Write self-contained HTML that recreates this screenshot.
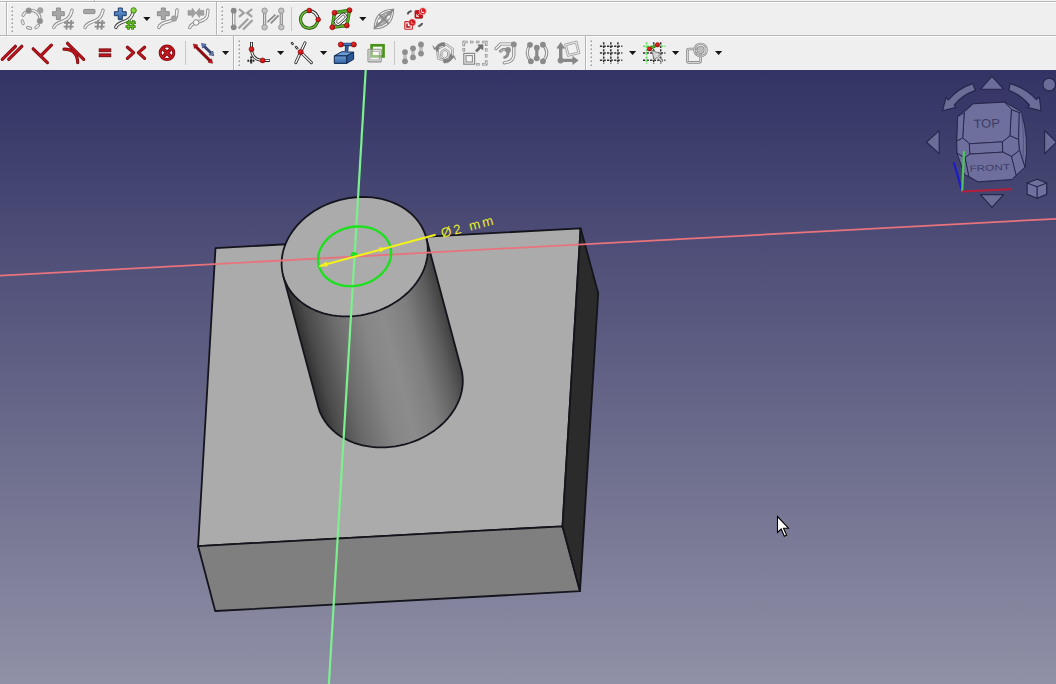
<!DOCTYPE html>
<html><head><meta charset="utf-8"><title>FreeCAD</title>
<style>
html,body{margin:0;padding:0;background:#efefef;width:1056px;height:684px;overflow:hidden;font-family:"Liberation Sans",sans-serif}
svg{display:block;position:absolute;left:0;top:0}
</style></head><body>
<svg width="1056" height="684" viewBox="0 0 1056 684">

<defs>
<linearGradient id="bg" x1="0" y1="70" x2="0" y2="684" gradientUnits="userSpaceOnUse">
<stop offset="0" stop-color="#333365"/><stop offset="1" stop-color="#9090a6"/>
</linearGradient>
<linearGradient id="cyl" x1="283.22" y1="275.8" x2="426.18" y2="237.6" gradientUnits="userSpaceOnUse">
<stop offset="0" stop-color="#303030"/><stop offset=".08" stop-color="#4a4a4a"/><stop offset=".25" stop-color="#6c6c6c"/>
<stop offset=".45" stop-color="#868686"/><stop offset=".58" stop-color="#8c8c8c"/><stop offset=".75" stop-color="#7e7e7e"/><stop offset=".9" stop-color="#5e5e5e"/><stop offset="1" stop-color="#404040"/>
</linearGradient>
</defs>
<rect x="0" y="70" width="1056" height="614" fill="url(#bg)"/>
<g stroke="#14141c" stroke-width="1.8" stroke-linejoin="round">
<polygon points="215.5,248.1 580.6,228.3 562.5,526.3 198.1,546.1" fill="#ababab"/>
<polygon points="198.1,546.1 562.5,526.3 580,591.2 215.2,611" fill="#7f7f7f"/>
<polygon points="580.6,228.3 598.2,293.3 580,591.2 562.5,526.3" fill="#2b2b2b"/>
<path d="M283.18 275.63 L318.18 406.63 L319.32 410.3 L320.77 413.87 L322.51 417.32 L324.54 420.65 L326.84 423.84 L329.42 426.87 L332.25 429.74 L335.33 432.42 L338.64 434.92 L342.17 437.21 L345.91 439.29 L349.83 441.15 L353.92 442.78 L358.17 444.17 L362.55 445.32 L367.05 446.23 L371.64 446.88 L376.31 447.28 L381.04 447.43 L385.81 447.32 L390.59 446.96 L395.37 446.34 L400.13 445.47 L404.84 444.35 L409.48 442.99 L414.04 441.4 L418.5 439.57 L422.83 437.52 L427.02 435.26 L431.05 432.79 L434.91 430.14 L438.57 427.3 L442.02 424.29 L445.25 421.12 L448.24 417.81 L450.97 414.37 L453.45 410.82 L455.65 407.17 L457.57 403.43 L459.21 399.63 L460.54 395.78 L461.57 391.89 L462.29 387.98 L462.7 384.07 L462.8 380.18 L462.58 376.32 L462.06 372.51 L461.22 368.77 L426.22 237.77 L427.06 241.51 L427.58 245.32 L427.8 249.18 L427.7 253.07 L427.29 256.98 L426.57 260.89 L425.54 264.78 L424.21 268.63 L422.57 272.43 L420.65 276.17 L418.45 279.82 L415.97 283.37 L413.24 286.81 L410.25 290.12 L407.02 293.29 L403.57 296.3 L399.91 299.14 L396.05 301.79 L392.02 304.26 L387.83 306.52 L383.5 308.57 L379.04 310.4 L374.48 311.99 L369.84 313.35 L365.13 314.47 L360.37 315.34 L355.59 315.96 L350.81 316.32 L346.04 316.43 L341.31 316.28 L336.64 315.88 L332.05 315.23 L327.55 314.32 L323.17 313.17 L318.92 311.78 L314.83 310.15 L310.91 308.29 L307.17 306.21 L303.64 303.92 L300.33 301.42 L297.25 298.74 L294.42 295.87 L291.84 292.84 L289.54 289.65 L287.51 286.32 L285.77 282.87 L284.32 279.3 L283.18 275.63Z" fill="url(#cyl)" stroke="none"/>
<path d="M283.18 275.63 L318.18 406.63 L319.32 410.3 L320.77 413.87 L322.51 417.32 L324.54 420.65 L326.84 423.84 L329.42 426.87 L332.25 429.74 L335.33 432.42 L338.64 434.92 L342.17 437.21 L345.91 439.29 L349.83 441.15 L353.92 442.78 L358.17 444.17 L362.55 445.32 L367.05 446.23 L371.64 446.88 L376.31 447.28 L381.04 447.43 L385.81 447.32 L390.59 446.96 L395.37 446.34 L400.13 445.47 L404.84 444.35 L409.48 442.99 L414.04 441.4 L418.5 439.57 L422.83 437.52 L427.02 435.26 L431.05 432.79 L434.91 430.14 L438.57 427.3 L442.02 424.29 L445.25 421.12 L448.24 417.81 L450.97 414.37 L453.45 410.82 L455.65 407.17 L457.57 403.43 L459.21 399.63 L460.54 395.78 L461.57 391.89 L462.29 387.98 L462.7 384.07 L462.8 380.18 L462.58 376.32 L462.06 372.51 L461.22 368.77 L426.22 237.77" fill="none"/>
<path d="M427.72 252.74 L427.34 256.65 L426.64 260.55 L425.64 264.44 L424.33 268.3 L422.73 272.11 L420.83 275.85 L418.65 279.51 L416.2 283.07 L413.48 286.52 L410.51 289.84 L407.3 293.02 L403.87 296.04 L400.23 298.9 L396.39 301.57 L392.37 304.06 L388.2 306.34 L383.87 308.4 L379.43 310.25 L374.88 311.86 L370.24 313.24 L365.53 314.38 L360.78 315.27 L356 315.91 L351.22 316.3 L346.45 316.43 L341.72 316.31 L337.04 315.93 L332.44 315.29 L327.93 314.41 L323.54 313.28 L319.28 311.91 L315.18 310.3 L311.24 308.46 L307.49 306.39 L303.94 304.12 L300.61 301.64 L297.51 298.97 L294.65 296.12 L292.05 293.1 L289.72 289.93 L287.67 286.61 L285.91 283.17 L284.44 279.61 L283.27 275.95 L282.4 272.21 L281.85 268.41 L281.61 264.55 L281.68 260.66 L282.06 256.75 L282.76 252.85 L283.76 248.96 L285.07 245.1 L286.67 241.29 L288.57 237.55 L290.75 233.89 L293.2 230.33 L295.92 226.88 L298.89 223.56 L302.1 220.38 L305.53 217.36 L309.17 214.5 L313.01 211.83 L317.03 209.34 L321.2 207.06 L325.53 205 L329.97 203.15 L334.52 201.54 L339.16 200.16 L343.87 199.02 L348.62 198.13 L353.4 197.49 L358.18 197.1 L362.95 196.97 L367.68 197.09 L372.36 197.47 L376.96 198.11 L381.47 198.99 L385.86 200.12 L390.12 201.49 L394.22 203.1 L398.16 204.94 L401.91 207.01 L405.46 209.28 L408.79 211.76 L411.89 214.43 L414.75 217.28 L417.35 220.3 L419.68 223.47 L421.73 226.79 L423.49 230.23 L424.96 233.79 L426.13 237.45 L427 241.19 L427.55 244.99 L427.79 248.85 L427.72 252.74Z" fill="#ababab"/>
</g>
<line x1="0" y1="275.7" x2="1056" y2="218.8" stroke="#e8737d" stroke-width="1.8"/>
<line x1="365.7" y1="70" x2="328.9" y2="684" stroke="#7df08e" stroke-width="2.2"/>
<path d="M391.11 254.32 L390.82 256.92 L390.25 259.52 L389.42 262.1 L388.31 264.63 L386.95 267.1 L385.35 269.49 L383.51 271.77 L381.45 273.94 L379.19 275.97 L376.74 277.86 L374.12 279.58 L371.35 281.12 L368.45 282.47 L365.45 283.63 L362.37 284.57 L359.23 285.3 L356.05 285.81 L352.86 286.1 L349.68 286.16 L346.55 285.99 L343.47 285.6 L340.48 284.98 L337.59 284.14 L334.84 283.1 L332.23 281.85 L329.8 280.4 L327.55 278.77 L325.51 276.97 L323.69 275.01 L322.11 272.91 L320.78 270.69 L319.7 268.35 L318.88 265.93 L318.34 263.42 L318.08 260.87 L318.09 258.28 L318.38 255.68 L318.95 253.08 L319.78 250.5 L320.89 247.97 L322.25 245.5 L323.85 243.11 L325.69 240.83 L327.75 238.66 L330.01 236.63 L332.46 234.74 L335.08 233.02 L337.85 231.48 L340.75 230.13 L343.75 228.97 L346.83 228.03 L349.97 227.3 L353.15 226.79 L356.34 226.5 L359.52 226.44 L362.65 226.61 L365.73 227 L368.72 227.62 L371.61 228.46 L374.36 229.5 L376.97 230.75 L379.4 232.2 L381.65 233.83 L383.69 235.63 L385.51 237.59 L387.09 239.69 L388.42 241.91 L389.5 244.25 L390.32 246.67 L390.86 249.18 L391.12 251.73 L391.11 254.32Z" fill="none" stroke="#1ee01e" stroke-width="2.4"/>
<ellipse cx="354" cy="254.7" rx="3.4" ry="2.6" fill="#1ee01e"/>
<g stroke="#f2f21a" fill="#f2f21a">
<line x1="319.1" y1="266.2" x2="435.6" y2="234.8" stroke-width="2"/>
<polygon points="319.1,266.2 326.6,261.6 327.8,266.4" stroke="none"/>
<polygon points="387.6,247.8 380.1,252.4 378.9,247.6" stroke="none"/>
</g>
<text transform="translate(442.3,237.8) rotate(-14.3)" font-family="Liberation Sans, sans-serif" font-size="13.4" fill="#ecec28" textLength="53.5" lengthAdjust="spacing">&#216;2 mm</text>

<g id="navcube" stroke-linejoin="round" stroke-linecap="round">
<!-- arrow buttons -->
<g fill="#6c6c99" stroke="#25254c" stroke-width="1.15">
<polygon points="991.9,76.4 1003.6,89.2 980.6,89.2"/>
<polygon points="980.4,194.6 1003.6,194.6 992,207.4"/>
<polygon points="926.6,142.2 939.2,130.6 939.2,153.6"/>
<polygon points="1056.6,142.2 1044.6,130.6 1044.6,153.6"/>
<circle cx="1049.2" cy="84.6" r="6.3"/>
<!-- left curved arrow -->
<path d="M972.6 83.6 L975.4 90.4 Q962 95.2 954.2 105.2 L956.2 107.4 L942.6 110.8 L946 97.4 L948.4 100 Q957.6 88.6 972.6 83.6Z"/>
<!-- right curved arrow -->
<path d="M1010.2 83.6 L1008.8 90.2 Q1021.4 95 1029.6 105.4 L1027.4 107.4 L1041 110.8 L1039.4 97 L1036.4 99.6 Q1026.6 88.4 1010.2 83.6Z"/>
</g>
<!-- cube faces -->
<g fill="#6f6f9d" stroke="#24244a" stroke-width=".9">
<!-- silhouette backing -->
<path d="M973.4 103.6 L1004.9 102 L1021 111.8 Q1029.6 138 1024.9 167.2 L1011.8 179.5 L978 181.8 L965 175 L957.3 153.4 L957 141 L958 116.5Z"/>
<!-- top -->
<polygon points="973.4,103.8 1004.9,102.2 1011.8,109.6 1010.3,135.7 1002.6,141.8 969.6,143.8 962.7,138 964.2,112.7"/>
<!-- left edge -->
<polygon points="958,116.5 964.2,112.7 962.7,138 957,141"/>
<!-- corner left -->
<polygon points="957,141 962.7,138 969.6,143.8 970.3,154.1 965,158 957.3,153.4"/>
<!-- top-front edge -->
<polygon points="969.6,143.8 1002.6,141.8 1003.1,152.1 970.3,154.1"/>
<!-- front -->
<polygon points="970.3,154.1 1003.1,152.1 1011.8,156.4 1016.4,174.9 1011.8,179.5 978,181.8 968.8,176.4 965,158"/>
<!-- front-left edge -->
<polygon points="957.3,153.4 965,158 968.8,176.4 965,175"/>
<!-- corner right -->
<polygon points="1002.6,141.8 1010.3,135.7 1018.7,139.5 1019.5,150.3 1011.8,156.4 1003.1,152.1"/>
<!-- top-right edge -->
<polygon points="1011.8,109.6 1019.5,112.7 1018.7,139.5 1010.3,135.7"/>
<!-- top-back-right corner -->
<polygon points="1004.9,102.2 1021,111.8 1019.5,112.7 1011.8,109.6"/>
<!-- right face -->
<path d="M1019.5 112.7 L1021 111.8 Q1029.6 138 1024.9 167.2 L1019.5 150.3 L1018.7 139.5Z"/>
<path d="M1021.4 113.5 Q1024.6 138 1022.8 160" fill="none" stroke-width=".8" stroke="#4a4a78"/>
<!-- front-right edge -->
<polygon points="1011.8,156.4 1019.5,150.3 1024.9,167.2 1016.4,174.9"/>
</g>
<g font-family="Liberation Sans, sans-serif" fill="#3c3c66" text-anchor="middle">
<text transform="translate(986.9,127.6) rotate(-2.5)" font-size="12.2" textLength="26.5" lengthAdjust="spacingAndGlyphs">TOP</text>
<text transform="translate(989.9,170.6) rotate(-2.5) scale(1,.68)" font-size="12.2" textLength="40.5" lengthAdjust="spacingAndGlyphs">FRONT</text>
</g>
<!-- axes -->
<g stroke-width="2.2" fill="none" stroke-linecap="butt">
<line x1="962.2" y1="191.5" x2="953.8" y2="162.2" stroke="#1c1ccc"/>
<line x1="962.2" y1="191.5" x2="964" y2="151.1" stroke="#4ec45e"/>
<line x1="962.2" y1="191.5" x2="1011.6" y2="189.1" stroke="#b0203c"/>
</g>
<!-- mini cube -->
<g fill="#70709e" stroke="#24244a" stroke-width="1.2">
<polygon points="1037.1,179.2 1046.7,183 1046.7,194.4 1037.1,198.2 1027.1,194.4 1027.1,183"/>
<path d="M1027.1 183 L1037.1 186.8 L1046.7 183 M1037.1 186.8 L1037.1 198.2" fill="none"/>
</g>
</g>


<path d="M777.5 516.5 L777.5 532.5 L781.2 529 L784.3 536.3 L786.6 535.3 L783.5 528.2 L788.5 528.2 Z" fill="#fff" stroke="#000" stroke-width="1.1" stroke-linejoin="miter"/>

<g id="toolbar">
<defs>
<radialGradient id="rd" cx=".4" cy=".38" r=".65"><stop offset="0" stop-color="#e82a2a"/><stop offset=".65" stop-color="#cc1616"/><stop offset="1" stop-color="#980a0a"/></radialGradient>
<linearGradient id="blu" x1="0" y1="0" x2="0" y2="1"><stop offset="0" stop-color="#6a9ad4"/><stop offset="1" stop-color="#3465a4"/></linearGradient>
<path id="dd" d="M0 0 L7.2 0 L3.6 4 Z" fill="#161616"/>
<g id="hdl" fill="#a0a0a0">
<rect x="0" y="0" width="1.6" height="1.6"/><rect x="0" y="4" width="1.6" height="1.6"/><rect x="0" y="8" width="1.6" height="1.6"/><rect x="0" y="12" width="1.6" height="1.6"/><rect x="0" y="16" width="1.6" height="1.6"/><rect x="0" y="20" width="1.6" height="1.6"/><rect x="0" y="24" width="1.6" height="1.6"/>
<g fill="#fbfbfb"><rect x="-1" y="-1" width="1.2" height="1.2"/><rect x="-1" y="3" width="1.2" height="1.2"/><rect x="-1" y="7" width="1.2" height="1.2"/><rect x="-1" y="11" width="1.2" height="1.2"/><rect x="-1" y="15" width="1.2" height="1.2"/><rect x="-1" y="19" width="1.2" height="1.2"/><rect x="-1" y="23" width="1.2" height="1.2"/></g>
</g>
</defs>
<rect x="0" y="0" width="1056" height="70" fill="#efefef"/>
<!-- frame lines -->
<g shape-rendering="crispEdges">
<rect x="0" y="0" width="1056" height="1" fill="#f4f4f4"/>
<rect x="0" y="1" width="1056" height="1" fill="#b6b6b6"/>
<rect x="0" y="2" width="1056" height="1" fill="#fcfcfc"/>
<rect x="94" y="0" width="1" height="1" fill="#b6b6b6"/><rect x="95" y="0" width="1" height="1" fill="#fff"/>
<rect x="0" y="35" width="1056" height="1" fill="#b6b6b6"/>
<rect x="0" y="36" width="1056" height="1" fill="#fcfcfc"/>
<rect x="6" y="2" width="1" height="33" fill="#b6b6b6"/><rect x="7" y="3" width="1" height="32" fill="#fcfcfc"/>
<rect x="216" y="2" width="1" height="33" fill="#b6b6b6"/><rect x="217" y="3" width="1" height="32" fill="#fcfcfc"/>
<rect x="233" y="36" width="1" height="34" fill="#b6b6b6"/><rect x="234" y="37" width="1" height="33" fill="#fcfcfc"/>
<rect x="585" y="36" width="1" height="34" fill="#b6b6b6"/><rect x="586" y="37" width="1" height="33" fill="#fcfcfc"/>
<!-- in-toolbar separators -->
<rect x="291" y="7" width="1" height="24" fill="#c6c6c6"/>
<rect x="185" y="41" width="1" height="24" fill="#c6c6c6"/>
<rect x="394" y="41" width="1" height="24" fill="#c6c6c6"/>
</g>
<use href="#hdl" x="11.4" y="6.4"/>
<use href="#hdl" x="221.4" y="6.4"/>
<use href="#hdl" x="238.4" y="40.4"/>
<use href="#hdl" x="590.4" y="40.4"/>
<!-- dropdown arrows -->
<use href="#dd" x="143.2" y="17"/>
<use href="#dd" x="359.2" y="17"/>
<use href="#dd" x="222" y="51"/>
<use href="#dd" x="277" y="51"/>
<use href="#dd" x="320" y="51"/>
<use href="#dd" x="629" y="51"/>
<use href="#dd" x="672" y="51"/>
<use href="#dd" x="715" y="51"/>

<!-- ================= ROW 1 ================= -->
<!-- 1: periodic bspline (disabled) -->
<g fill="none" stroke-linecap="round">
<g stroke="#8c8c8c" stroke-width="3.2"><path d="M28.7 10.7 A9 9 0 0 1 39.9 21"/><path d="M23 15.2 L25 12.6"/><path d="M22.3 21 L23.2 23.6"/><path d="M27.6 27.6 L30.6 28.4"/><path d="M36 27.6 L38.4 25.4"/></g>
<g stroke="#f4f4f4" stroke-width="1.5"><path d="M28.7 10.7 A9 9 0 0 1 39.9 21"/><path d="M23 15.2 L25 12.6"/><path d="M22.3 21 L23.2 23.6"/><path d="M27.6 27.6 L30.6 28.4"/><path d="M36 27.6 L38.4 25.4"/></g>
</g>
<g fill="#8e8e8e" stroke="#a4a4a4" stroke-width=".6"><circle cx="28.7" cy="10.7" r="2.9"/><circle cx="40.2" cy="10.4" r="2.9" fill="#a2a2a2"/><circle cx="39.9" cy="21" r="2.9"/></g>

<!-- 2: increase degree (disabled) -->
<g>
<path d="M56.4 8 h4 v3.7 h3.9 v4 h-3.9 v3.9 h-4 v-3.9 h-3.9 v-4 h3.9z" fill="#a6a6a6" stroke="#8c8c8c" stroke-width="1" stroke-linejoin="round"/>
<g fill="none" stroke-linecap="round"><path d="M53.8 27.4 C56.5 19.5 69.5 24.5 72 10.2" stroke="#8c8c8c" stroke-width="3.4"/><path d="M53.8 27.4 C56.5 19.5 69.5 24.5 72 10.2" stroke="#f4f4f4" stroke-width="1.6"/></g>
<path d="M64 22.8 h10 M63.6 26.6 h10 M67.4 20 l-1 9.6 M71.4 20 l-1 9.6" stroke="#8e8e8e" stroke-width="1.9" fill="none"/>
</g>

<!-- 3: decrease degree (disabled) -->
<g>
<rect x="83.6" y="9.4" width="11.4" height="4.2" rx="1" fill="#a6a6a6" stroke="#8c8c8c" stroke-width="1"/>
<g fill="none" stroke-linecap="round"><path d="M85 27.4 C87.7 19.5 100.5 24.5 103 10.2" stroke="#8c8c8c" stroke-width="3.4"/><path d="M85 27.4 C87.7 19.5 100.5 24.5 103 10.2" stroke="#f4f4f4" stroke-width="1.6"/></g>
<path d="M95 22.8 h10 M94.6 26.6 h10 M98.4 20 l-1 9.6 M102.4 20 l-1 9.6" stroke="#8e8e8e" stroke-width="1.9" fill="none"/>
</g>

<!-- 4: increase knot multiplicity (enabled) -->
<g>
<path d="M118.3 8 h4 v3.7 h3.9 v4 h-3.9 v3.9 h-4 v-3.9 h-3.9 v-4 h3.9z" fill="url(#blu)" stroke="#1c3a68" stroke-width="1" stroke-linejoin="round"/>
<g fill="none" stroke-linecap="round"><path d="M115.8 27.4 C118.5 19.5 131 24.5 133.4 11" stroke="#3a3a3a" stroke-width="3.4"/><path d="M115.8 27.4 C118.5 19.5 131 24.5 133.4 11" stroke="#f4f4f4" stroke-width="1.6"/></g>
<path d="M126 22.8 h10 M125.6 26.6 h10 M129.4 20 l-1 9.6 M133.4 20 l-1 9.6" stroke="#2e6b0e" stroke-width="2.6" fill="none"/>
<path d="M126 22.8 h10 M125.6 26.6 h10 M129.4 20 l-1 9.6 M133.4 20 l-1 9.6" stroke="#66bb26" stroke-width="1.3" fill="none"/>
<circle cx="133.6" cy="10.4" r="2.7" fill="#84d83c" stroke="#3a7a10" stroke-width=".9"/>
</g>

<!-- 5: decrease knot multiplicity (disabled) -->
<g>
<path d="M161.3 8 h4 v3.7 h3.9 v4 h-3.9 v3.9 h-4 v-3.9 h-3.9 v-4 h3.9z" fill="#a6a6a6" stroke="#8c8c8c" stroke-width="1" stroke-linejoin="round"/>
<g fill="none" stroke-linecap="round"><path d="M158.8 27.4 C161 20 173 23.5 176.2 17 C177 14.5 176.6 12 177 10" stroke="#8c8c8c" stroke-width="3.4"/><path d="M158.8 27.4 C161 20 173 23.5 176.2 17 C177 14.5 176.6 12 177 10" stroke="#f4f4f4" stroke-width="1.6"/></g>
<rect x="171.6" y="16" width="5" height="5" rx="1.6" fill="#a4a4a4" stroke="#949494" stroke-width=".7"/>
</g>

<!-- 6: join curves (disabled) -->
<g>
<path d="M188 10.4 h4.2 v-2.2 l3.7 4.6 l3.7 -4.6 v2.2 h4.2 v4.8 h-4.2 v2.4 l-3.7 -4.6 l-3.7 4.6 v-2.4 h-4.2z" fill="#a0a0a0" stroke="#909090" stroke-width=".6" stroke-linejoin="round"/>
<g fill="none" stroke-linecap="round"><path d="M189.8 27.6 C192 20 205 23.5 207.2 16 C207.8 13.5 207.6 12 207.9 10.2" stroke="#8c8c8c" stroke-width="3.4"/><path d="M189.8 27.6 C192 20 205 23.5 207.2 16 C207.8 13.5 207.6 12 207.9 10.2" stroke="#f4f4f4" stroke-width="1.6"/></g>
<circle cx="196.1" cy="22.5" r="2.8" fill="#f6f6f6" stroke="#8c8c8c" stroke-width="1"/>
</g>

<!-- A: remove axes alignment (disabled) -->
<g>
<path d="M233.7 10.7 V27.3" stroke="#8c8c8c" stroke-width="3.4"/><path d="M233.7 10.7 V27.3" stroke="#f6f6f6" stroke-width="1.4"/>
<circle cx="233.7" cy="10.7" r="2.9" fill="#8a8a8a"/><circle cx="233.7" cy="27.3" r="2.9" fill="#8a8a8a"/>
<g fill="none" stroke="#a0a0a0" stroke-width="2.2" stroke-linecap="butt"><path d="M239 9 L243.8 12.9 L239 16.8"/><path d="M252.2 9 L247.2 12.9 L252.2 16.8"/><path d="M238.6 28.4 L248.2 18.8"/><path d="M243 29.6 L252.6 20"/></g>
</g>

<!-- B: (disabled) two bars with parallels -->
<g>
<path d="M264.6 10.7 V27.3 M281.3 10.7 V27.3" stroke="#8c8c8c" stroke-width="3.2"/><path d="M264.6 10.7 V27.3 M281.3 10.7 V27.3" stroke="#d8d8d8" stroke-width="1.2"/>
<g fill="#c4c4c4" stroke="#909090" stroke-width=".9"><circle cx="264.6" cy="10.7" r="2.7"/><circle cx="264.6" cy="27.3" r="2.7"/><circle cx="281.3" cy="10.7" r="2.7"/><circle cx="281.3" cy="27.3" r="2.7"/></g>
<path d="M267.4 22.2 L275.4 14.6 M270.8 23.4 L278.6 15.4" stroke="#8a8a8a" stroke-width="1.7" fill="none"/>
</g>

<!-- circle by 3 points -->
<g fill="none">
<circle cx="309.2" cy="19.6" r="8.7" stroke="#2c5a10" stroke-width="3.2"/>
<circle cx="309.2" cy="19.6" r="8.7" stroke="#6cc03c" stroke-width="1.5"/>
<path d="M309.3 10.9 A8.7 8.7 0 0 1 317.9 19.6" stroke="#333" stroke-width="3.2"/>
<path d="M309.3 10.9 A8.7 8.7 0 0 1 317.9 19.6" stroke="#f6f6f6" stroke-width="1.5"/>
</g>
<circle cx="309.3" cy="10.5" r="2.4" fill="url(#rd)" stroke="#8c0a0a" stroke-width=".6"/>
<circle cx="318.2" cy="19.6" r="2.4" fill="url(#rd)" stroke="#8c0a0a" stroke-width=".6"/>

<!-- rectangle / slot -->
<g>
<polygon points="334.5,12.8 349.5,10.2 346.8,25.5 332.3,27.3" fill="none" stroke="#2c6a10" stroke-width="3.4" stroke-linejoin="round"/>
<polygon points="334.5,12.8 349.5,10.2 346.8,25.5 332.3,27.3" fill="none" stroke="#58b02a" stroke-width="2" stroke-linejoin="round"/>
<g transform="translate(340.7,19.3) rotate(-42)"><rect x="-7.2" y="-3.6" width="14.4" height="7.2" rx="3" fill="#fdfdfd" stroke="#2a2a2a" stroke-width=".9"/><rect x="-5.2" y="-1.7" width="10.4" height="3.4" rx="1.4" fill="#f0f0f0" stroke="#3a3a3a" stroke-width=".8"/></g>
<g fill="url(#rd)" stroke="#8c0a0a" stroke-width=".6"><circle cx="334.5" cy="12.8" r="2.5"/><circle cx="349.5" cy="10.2" r="2.5"/><circle cx="346.8" cy="25.5" r="2.5"/><circle cx="332.3" cy="27.3" r="2.5"/></g>
</g>

<!-- ellipse (disabled) -->
<g transform="translate(383.9,18.9) rotate(-45)">
<path d="M-13.8 0 Q0 -13.4 13.8 0 Q0 13.4 -13.8 0Z" fill="#f2f2f2" stroke="#8a8a8a" stroke-width="1"/>
<path d="M-11.4 0 Q0 -9.2 11.4 0 Q0 9.2 -11.4 0Z" fill="#b2b2b2" stroke="#8c8c8c" stroke-width=".9"/>
<path d="M-13.6 0 H13.6 M0 -6.4 V6.4" stroke="#8a8a8a" stroke-width="2"/>
<g fill="#f6f6f6"><ellipse cx="-4.4" cy="-2" rx="2" ry="1.15"/><ellipse cx="4.4" cy="2" rx="2" ry="1.15"/></g>
<g fill="#c0c0c0" stroke="#8e8e8e" stroke-width=".6"><circle cx="-4.4" cy="2.1" r="1.5"/><circle cx="4.4" cy="-2.1" r="1.5"/></g>
</g>

<!-- toggle construction -->
<g>
<rect x="415" y="10.6" width="7.6" height="7.6" rx=".8" fill="#c8141c" stroke="#a00c14" stroke-width=".8"/>
<circle cx="422.8" cy="11.2" r="3.5" fill="#d81c24" stroke="#f8d0d0" stroke-width=".7"/>
<path d="M421.6 9.6 v2.8 h2.6" stroke="#fff" stroke-width=".9" fill="none"/>
<path d="M416.6 16.6 l3 -3 M416.6 14.2 v2.4 h2.4" stroke="#f4dede" stroke-width=".9" fill="none"/>
<rect x="404.8" y="21.6" width="7.6" height="7.6" rx=".8" fill="#fbf2f2" stroke="#d01820" stroke-width="1.1"/>
<path d="M407 23.6 v3.4 h3.4" stroke="#b01018" stroke-width="1.5" fill="none"/>
<circle cx="412.2" cy="22.4" r="3.5" fill="#d01820" stroke="#f4c4c4" stroke-width=".5"/>
<path d="M411.4 21 v2.4 h2" stroke="#f2b8b8" stroke-width=".7" fill="none"/>
<path d="M407.8 14.4 Q408 11.8 410.6 11.4" stroke="#505050" stroke-width="1.9" fill="none"/><path d="M410 9.8 L412.4 11.2 L410.4 12.8Z" fill="#505050"/>
<path d="M422 23 Q421.8 25.4 419.2 25.9" stroke="#505050" stroke-width="1.9" fill="none"/><path d="M419.8 24.4 L417.4 26 L419.6 27.5Z" fill="#505050"/>
</g>

<!-- ================= ROW 2 ================= -->
<!-- parallel -->
<g stroke-linecap="round" fill="none">
<path d="M2.3 59.4 L15.4 46.3 M8.7 59.4 L21.8 46.3" stroke="#7c0a10" stroke-width="3.2"/>
<path d="M2.3 59.4 L15.4 46.3 M8.7 59.4 L21.8 46.3" stroke="#c4161e" stroke-width="1.5"/>
<!-- perpendicular -->
<path d="M33.2 48.8 L47.4 62.6 M41.2 55.3 L51.4 45.1" stroke="#7c0a10" stroke-width="3.2"/>
<path d="M33.2 48.8 L47.4 62.6 M41.2 55.3 L51.4 45.1" stroke="#c4161e" stroke-width="1.5"/>
<!-- tangent -->
<path d="M67.5 43.3 L83.7 59.4 M64 49.2 C72 49 77.6 53.5 77.7 62.6" stroke="#7c0a10" stroke-width="3.2"/>
<path d="M67.5 43.3 L83.7 59.4 M64 49.2 C72 49 77.6 53.5 77.7 62.6" stroke="#c4161e" stroke-width="1.5"/>
<!-- symmetric -->
<path d="M127.4 47.2 L133.6 52.6 L127.4 58.4 M144.6 47.2 L138.4 52.6 L144.6 58.4" stroke="#7c0a10" stroke-width="3.2" stroke-linejoin="round"/>
<path d="M127.4 47.2 L133.6 52.6 L127.4 58.4 M144.6 47.2 L138.4 52.6 L144.6 58.4" stroke="#c4161e" stroke-width="1.5" stroke-linejoin="round"/>
</g>
<!-- equal -->
<g><rect x="99.2" y="48.9" width="11.6" height="2.8" fill="#c4161e" stroke="#6c080c" stroke-width=".9"/><rect x="99.2" y="53.9" width="11.6" height="2.8" fill="#c4161e" stroke="#6c080c" stroke-width=".9"/></g>
<!-- block -->
<g fill="none">
<circle cx="167" cy="52.8" r="6.8" fill="#fbfbfb" stroke="#7c0a10" stroke-width="3"/>
<path d="M162.2 48 L171.8 57.6 M171.8 48 L162.2 57.6" stroke="#7c0a10" stroke-width="3.8"/>
<circle cx="167" cy="52.8" r="6.8" stroke="#c4161e" stroke-width="1.4"/>
<path d="M162.2 48 L171.8 57.6 M171.8 48 L162.2 57.6" stroke="#c4161e" stroke-width="1.9"/>
</g>
<!-- dimension -->
<g>
<path d="M195.4 46.2 L210.6 61.4" stroke="#7c0a10" stroke-width="3"/>
<path d="M195.4 46.2 L210.6 61.4" stroke="#b01018" stroke-width="1.2" stroke-dasharray="1 1"/>
<path d="M193.3 44 L197.8 45 L194.4 48.5Z" fill="#c0141c" stroke="#8c0a10" stroke-width=".6"/>
<path d="M212.6 63.3 L208.1 62.3 L211.5 58.8Z" fill="#c0141c" stroke="#8c0a10" stroke-width=".6"/>
<path d="M203.4 45.4 L211.8 53.8" stroke="#2c3868" stroke-width="2.8"/>
<path d="M203.4 45.4 L211.8 53.8" stroke="#4a5c94" stroke-width="1.1" stroke-dasharray="1 1"/>
<path d="M201.5 43.4 L206.2 44.4 L202.6 48.2Z" fill="#5c82c0" stroke="#2c3868" stroke-width=".6"/>
<path d="M213.8 55.8 L209.1 54.8 L212.8 51Z" fill="#7484ac" stroke="#2c3868" stroke-width=".6"/>
</g>

<!-- fillet -->
<g fill="none">
<path d="M251.5 41.9 V49.2 Q252 59.8 262.6 60.4 H269.8" stroke="#222" stroke-width="3"/>
<path d="M251.5 42.6 V49.2 Q252 59.8 262.6 60.4 H269.2" stroke="#fafafa" stroke-width="1.2"/>
<path d="M251.2 56.6 V64.6 M247.4 60.8 H255" stroke="#222" stroke-width="2" stroke-dasharray="1.8 .8"/>
</g>
<circle cx="251.5" cy="49.2" r="2.5" fill="url(#rd)" stroke="#8c0a0a" stroke-width=".6"/>
<circle cx="262.6" cy="60.4" r="2.5" fill="url(#rd)" stroke="#8c0a0a" stroke-width=".6"/>

<!-- trim -->
<g fill="none" stroke-linecap="round">
<path d="M305 42.8 L295.8 62.6 M300.6 52 L311.4 62.6" stroke="#333" stroke-width="3"/>
<path d="M305 42.8 L295.8 62.6 M300.6 52 L311.4 62.6" stroke="#fafafa" stroke-width="1.3"/>
<path d="M291.9 43.1 L292.7 43.9 M295.9 46.9 L297.3 48.3" stroke="#333" stroke-width="2.4"/>
<path d="M291.9 43.1 L292.7 43.9 M295.9 46.9 L297.3 48.3" stroke="#ddd" stroke-width=".8"/>
</g>
<circle cx="300.6" cy="52" r="2.6" fill="url(#rd)" stroke="#8c0a0a" stroke-width=".6"/>

<!-- external geometry -->
<g stroke-linejoin="round">
<path d="M340.8 44.5 H353.8" stroke="#1c3a68" stroke-width="3.4"/><path d="M340.8 44.3 H353.8" stroke="#4a7cc0" stroke-width="1.6"/>
<path d="M346.9 45.5 L346.5 51.4" stroke="#1c3a68" stroke-width="3.6"/><path d="M346.9 46 L346.6 51" stroke="#3c68a8" stroke-width="1.4"/>
<polygon points="334.3,55.9 341.8,51.7 353.6,52.2 346.7,55.9" fill="#6c9cd8" stroke="#10284e" stroke-width="1"/>
<polygon points="346.7,55.9 353.6,52.2 353.6,59.3 346.7,63.4" fill="#2c5894" stroke="#10284e" stroke-width="1"/>
<polygon points="334.3,55.9 346.7,55.9 346.7,63.4 334.3,63.4" fill="url(#blu)" stroke="#10284e" stroke-width="1"/>
<circle cx="340.8" cy="44.5" r="2.6" fill="url(#rd)" stroke="#8c0a0a" stroke-width=".6"/>
<circle cx="353.8" cy="44.5" r="2.6" fill="url(#rd)" stroke="#8c0a0a" stroke-width=".6"/>
</g>

<!-- carbon copy -->
<g>
<rect x="371.6" y="45.3" width="11.9" height="11.1" fill="#f6fbee" stroke="#4a921c" stroke-width="2.7"/>
<rect x="368" y="49.3" width="13.2" height="12.6" rx=".8" fill="#fafafa" fill-opacity=".45" stroke="#8c8c8c" stroke-width="1.1"/>
<rect x="369.9" y="51.2" width="9.4" height="8.8" fill="none" stroke="#9a9a9a" stroke-width=".9"/>
</g>

<!-- rectangular array -->
<g>
<path d="M405 52.1 V61.3 M413 48.3 V57.4 M421 44.5 V53.6" stroke="#8e8e8e" stroke-width="2.8"/>
<path d="M405 54 V59.4 M413 50.4 V55.6 M421 46.6 V51.6" stroke="#e2e2e2" stroke-width="1.2"/>
<g fill="#8e8e8e"><circle cx="405" cy="52.1" r="2.9"/><circle cx="405" cy="61.3" r="2.9"/><circle cx="413" cy="48.3" r="2.9"/><circle cx="413" cy="57.4" r="2.9"/><circle cx="421" cy="44.5" r="2.9"/><circle cx="421" cy="53.6" r="2.9"/></g>
</g>

<!-- rotate -->
<g fill="none">
<g stroke="#9a9a9a" stroke-width=".9">
<polygon points="446.5,43.6 453.4,48.4 453.2,57.4 445.6,61.4 437.6,59.2 436.2,48.2"/>
<polygon points="446.3,45.4 451.6,49.2 451.4,56.4 445.4,59.6 439.2,57.8 438,49.2"/>
<polygon points="445,48.6 449.2,51.2 449,57.4 444,60 440.4,56.6 441,51.2"/>
<polygon points="444.8,50.4 447.6,52 447.4,56.4 444,58.2 442,56 442.4,52.2"/>
</g>
<path d="M444.6 42.6 Q437.6 42 434.4 49.8 L432.8 45.6 L437.4 51.8 L439.4 47.6 L437.6 47.8 Q440 44.8 444.8 46.2 Z" fill="#808080" stroke="#7a7a7a" stroke-width=".5"/>
<path d="M443.8 63 Q450.8 63.6 454 55.6 L455.7 59.8 L450.8 53.6 L449 58 L450.8 57.6 Q448.4 60.4 443.6 59.2 Z" fill="#808080" stroke="#7a7a7a" stroke-width=".5"/>
</g>

<!-- scale -->
<g fill="none">
<path d="M463.8 46.2 V42 H467.6 M470 42 H473.4 M476 42 H479.4 M482.2 42 H486.2 V46 M486.2 48.2 V51.6 M486.2 54 V57.6 M486.2 60.2 V64.2 H482.2 M479.6 64.2 H476.2 M463.8 48 V51.4" stroke="#8a8a8a" stroke-width="2.6"/>
<path d="M463.8 45.6 V42 H467 M470.6 42 H472.8 M476.6 42 H478.8 M482.8 42 H486.2 V45.4 M486.2 48.8 V51 M486.2 54.6 V57 M486.2 60.8 V64.2 H482.8 M479 64.2 H476.8 M463.8 48.6 V50.8" stroke="#f6f6f6" stroke-width=".9"/>
<rect x="463.8" y="53.4" width="10.8" height="10.8" stroke="#8a8a8a" stroke-width="1.2" fill="#f2f2f2"/>
<rect x="466" y="55.6" width="6.4" height="6.4" stroke="#8a8a8a" stroke-width="1.1" fill="#f4f4f4"/>
<path d="M476 51.4 L480.6 46.8" stroke="#707070" stroke-width="2.8"/>
<path d="M477.8 45 L483 44.8 L482.8 50 Z" fill="#707070" stroke="#707070" stroke-width=".8" stroke-linejoin="round"/>
</g>

<!-- offset -->
<g fill="none" stroke-linecap="round" stroke-linejoin="round">
<path d="M496 48.6 L500.6 44 H513.8 V55 Q513.4 62 504.2 62.8" stroke="#8a8a8a" stroke-width="3.2"/>
<path d="M496 48.6 L500.6 44 H513.8 V55 Q513.4 62 504.2 62.8" stroke="#f6f6f6" stroke-width="1.4"/>
<path d="M500.4 51.2 L502.6 49.6 H508 V53 Q507.8 56.6 504.6 57.4" stroke="#8e8e8e" stroke-width="3"/>
<path d="M500.8 51 L502.8 49.8 H506" stroke="#c8c8c8" stroke-width="1"/>
</g>
<circle cx="513.8" cy="44.4" r="2.9" fill="#8c8c8c"/><circle cx="508" cy="50" r="2.9" fill="#8c8c8c"/>

<!-- symmetry -->
<g fill="none">
<path d="M530 44.8 Q524 52.8 530.8 61.3 M542.9 44.7 Q550.6 52.8 542.9 61.3" stroke="#8a8a8a" stroke-width="3"/>
<path d="M530 44.8 Q524 52.8 530.8 61.3 M542.9 44.7 Q550.6 52.8 542.9 61.3" stroke="#f2f2f2" stroke-width="1.1"/>
<path d="M536.8 47.7 V58.3" stroke="#8a8a8a" stroke-width="3.2"/>
<g fill="#8a8a8a"><circle cx="530" cy="44.8" r="2.9"/><circle cx="530.9" cy="61.3" r="2.9"/><circle cx="536.8" cy="47.7" r="2.9"/><circle cx="536.8" cy="58.3" r="2.9"/><circle cx="542.9" cy="44.7" r="2.9"/><circle cx="542.9" cy="61.3" r="2.9"/></g>
</g>

<!-- axes / move -->
<g>
<g transform="translate(572.2,48.8) rotate(-14)" fill="none" stroke="#a6a6a6" stroke-width=".9"><rect x="-6.4" y="-6.4" width="12.8" height="12.8" fill="#f2f2f2"/><rect x="-4.6" y="-4.6" width="9.2" height="9.2"/></g>
<path d="M560.7 60.4 V47.6 M560.7 60.4 H573" stroke="#888" stroke-width="3.4"/>
<path d="M560.7 42.6 L564.6 48.2 H556.8Z M578.2 60.4 L572.8 56.4 V64.4Z" fill="#888" stroke="#808080" stroke-width=".6" stroke-linejoin="round"/>
<circle cx="560.6" cy="60.4" r="3" fill="#8a8a8a"/>
</g>

<!-- grid -->
<g fill="none" stroke="#303030" stroke-width="1.5" stroke-dasharray="2.3 1.25">
<path d="M603.7 42.2 V64 M610.8 42.2 V64 M617.9 42.2 V64"/>
<path d="M599.9 46.2 H622.4 M599.9 53 H622.4 M599.9 60.2 H622.4"/>
</g>

<!-- snap -->
<g fill="none" stroke-width="1.5" stroke-dasharray="2.3 1.25">
<path d="M653.7 42.2 V64 M660.7 42.2 V64" stroke="#2e2e2e"/>
<path d="M643 53 H665.4 M643 60.2 H665.4" stroke="#2e2e2e"/>
<path d="M646.6 42.2 V64 M643 46.2 H665.4" stroke="#58e058"/>
</g>
<path d="M651.6 50.2 L654.4 60.2 L656.8 57.4 L661.6 62.2 L663 60.8 L658.2 56 L661.2 54 Z" fill="#d6d6d2" fill-opacity=".92" stroke="#6a6a6a" stroke-width=".8" stroke-linejoin="round"/>
<path d="M649.4 48.9 L657.5 44.8" stroke="#2c5a10" stroke-width="2.8"/><path d="M649.4 48.9 L657.5 44.8" stroke="#5cc028" stroke-width="1.3"/>
<circle cx="649.4" cy="48.9" r="2.2" fill="url(#rd)" stroke="#8c0a0a" stroke-width=".5"/><circle cx="657.5" cy="44.8" r="2.2" fill="url(#rd)" stroke="#8c0a0a" stroke-width=".5"/>

<!-- rendering order -->
<g fill="none">
<rect x="687.4" y="49" width="13.2" height="13.4" rx="1.6" stroke="#8a8a8a" stroke-width="2.6"/>
<rect x="687.4" y="49" width="13.2" height="13.4" rx="1.6" stroke="#f4f4f4" stroke-width=".8"/>
<circle cx="700.6" cy="50" r="3.7" fill="#bcbcbc" stroke="#8e8e8e" stroke-width=".9"/>
<circle cx="700.6" cy="50" r="6.2" stroke="#8a8a8a" stroke-width="2.2"/>
<circle cx="700.6" cy="50" r="6.2" stroke="#f4f4f4" stroke-width=".7"/>
<path d="M694.4 51.4 L697.4 52 L697 55.2Z" fill="#9a9a9a"/>
</g>
</g>

</svg>
</body></html>
